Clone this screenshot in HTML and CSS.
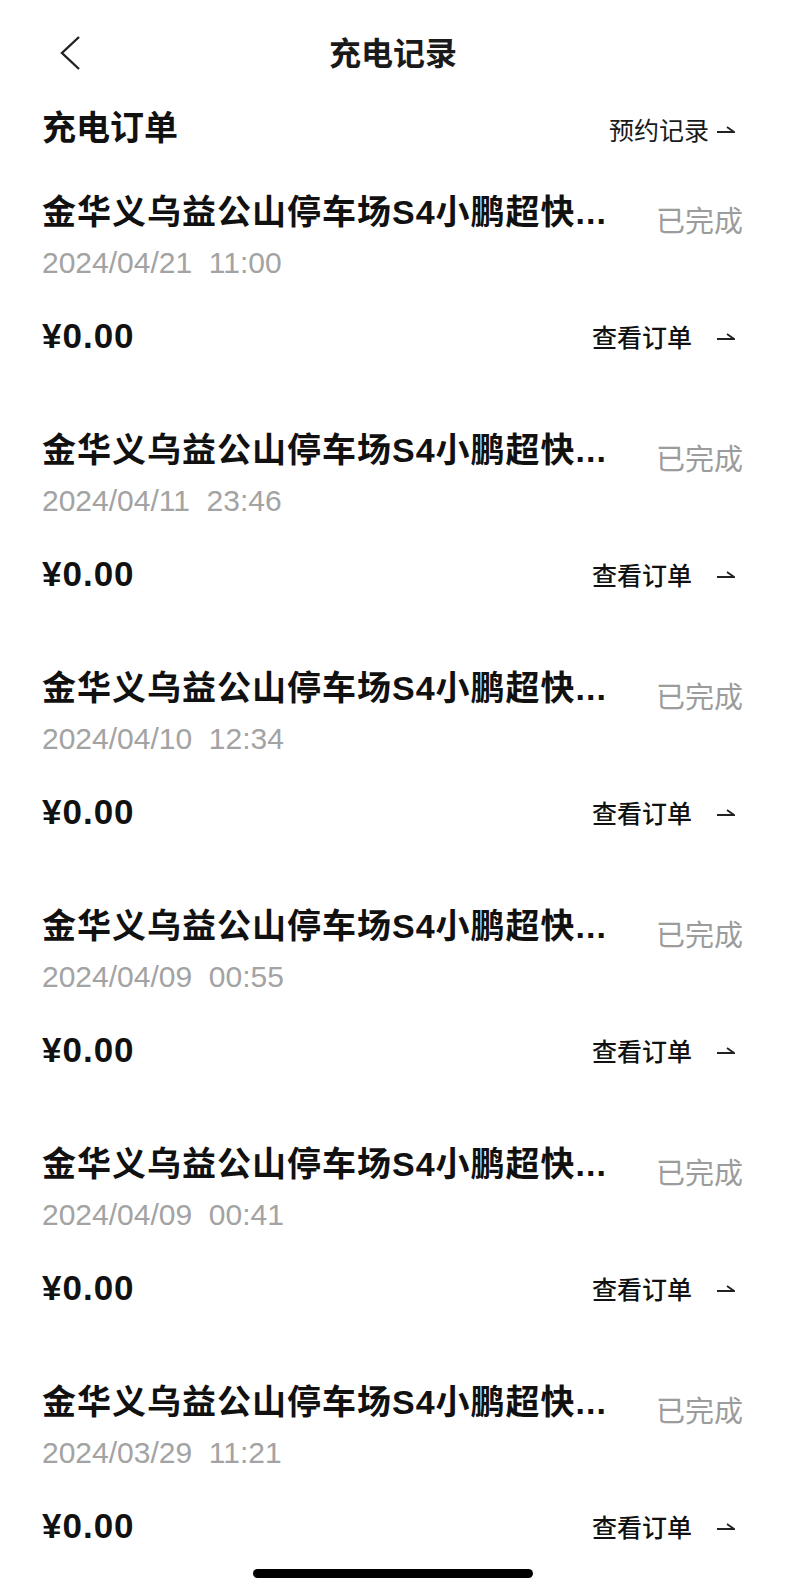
FILE: index.html
```html
<!DOCTYPE html>
<html lang="zh-CN">
<head>
    <meta charset="UTF-8">
    <meta name="viewport" content="width=device-width, initial-scale=1.0">
    <title>充电记录</title>
    <link rel="stylesheet" href="styles.css">
</head>
<body>
    <!-- Top navigation -->
    <header class="nav-bar">
        <button class="nav-back" aria-label="返回">
            <svg width="22" height="36" viewBox="0 0 22 36"><polyline points="20,2 3,18 20,34" fill="none" stroke="#222" stroke-width="2.4" stroke-linejoin="miter"/></svg>
        </button>
        <h1 class="nav-title">充电记录</h1>
        <span></span>
    </header>

    <!-- Section header -->
    <div class="section-head">
        <h2>充电订单</h2>
        <a class="link-more" href="#">预约记录
            <svg class="arrow" width="18" height="8" viewBox="0 0 18 8"><path d="M0 7H17L10 2" fill="none" stroke="#222" stroke-width="1.8"/></svg>
        </a>
    </div>

    <!-- Order list -->
    <ul class="order-list">
        <li class="order-item">
            <div class="order-top">
                <div class="order-main">
                    <div class="order-name">金华义乌益公山停车场S4小鹏超快...</div>
                    <div class="order-time">2024/04/21&nbsp;&nbsp;11:00</div>
                </div>
                <span class="order-status">已完成</span>
            </div>
            <div class="order-bottom">
                <span class="order-price">¥0.00</span>
                <a class="order-link" href="#">查看订单
                    <svg class="arrow" width="18" height="8" viewBox="0 0 18 8"><path d="M0 7H17L10 2" fill="none" stroke="#222" stroke-width="1.8"/></svg>
                </a>
            </div>
        </li>
        <li class="order-item">
            <div class="order-top">
                <div class="order-main">
                    <div class="order-name">金华义乌益公山停车场S4小鹏超快...</div>
                    <div class="order-time">2024/04/11&nbsp;&nbsp;23:46</div>
                </div>
                <span class="order-status">已完成</span>
            </div>
            <div class="order-bottom">
                <span class="order-price">¥0.00</span>
                <a class="order-link" href="#">查看订单
                    <svg class="arrow" width="18" height="8" viewBox="0 0 18 8"><path d="M0 7H17L10 2" fill="none" stroke="#222" stroke-width="1.8"/></svg>
                </a>
            </div>
        </li>
        <li class="order-item">
            <div class="order-top">
                <div class="order-main">
                    <div class="order-name">金华义乌益公山停车场S4小鹏超快...</div>
                    <div class="order-time">2024/04/10&nbsp;&nbsp;12:34</div>
                </div>
                <span class="order-status">已完成</span>
            </div>
            <div class="order-bottom">
                <span class="order-price">¥0.00</span>
                <a class="order-link" href="#">查看订单
                    <svg class="arrow" width="18" height="8" viewBox="0 0 18 8"><path d="M0 7H17L10 2" fill="none" stroke="#222" stroke-width="1.8"/></svg>
                </a>
            </div>
        </li>
        <li class="order-item">
            <div class="order-top">
                <div class="order-main">
                    <div class="order-name">金华义乌益公山停车场S4小鹏超快...</div>
                    <div class="order-time">2024/04/09&nbsp;&nbsp;00:55</div>
                </div>
                <span class="order-status">已完成</span>
            </div>
            <div class="order-bottom">
                <span class="order-price">¥0.00</span>
                <a class="order-link" href="#">查看订单
                    <svg class="arrow" width="18" height="8" viewBox="0 0 18 8"><path d="M0 7H17L10 2" fill="none" stroke="#222" stroke-width="1.8"/></svg>
                </a>
            </div>
        </li>
        <li class="order-item">
            <div class="order-top">
                <div class="order-main">
                    <div class="order-name">金华义乌益公山停车场S4小鹏超快...</div>
                    <div class="order-time">2024/04/09&nbsp;&nbsp;00:41</div>
                </div>
                <span class="order-status">已完成</span>
            </div>
            <div class="order-bottom">
                <span class="order-price">¥0.00</span>
                <a class="order-link" href="#">查看订单
                    <svg class="arrow" width="18" height="8" viewBox="0 0 18 8"><path d="M0 7H17L10 2" fill="none" stroke="#222" stroke-width="1.8"/></svg>
                </a>
            </div>
        </li>
        <li class="order-item">
            <div class="order-top">
                <div class="order-main">
                    <div class="order-name">金华义乌益公山停车场S4小鹏超快...</div>
                    <div class="order-time">2024/03/29&nbsp;&nbsp;11:21</div>
                </div>
                <span class="order-status">已完成</span>
            </div>
            <div class="order-bottom">
                <span class="order-price">¥0.00</span>
                <a class="order-link" href="#">查看订单
                    <svg class="arrow" width="18" height="8" viewBox="0 0 18 8"><path d="M0 7H17L10 2" fill="none" stroke="#222" stroke-width="1.8"/></svg>
                </a>
            </div>
        </li>
    </ul>

    <!-- iOS home indicator -->
    <div class="home-indicator"></div>
</body>
</html>
```

FILE: styles.css
```css
/* Base */
body {
    margin: 0;
    background-color: #fff;
    color: #111;
    font-family: "Liberation Sans", "Noto Sans CJK SC", sans-serif;
}
a {
    color: inherit;
    text-decoration: none;
}

/* Navigation bar */
.nav-bar {
    display: grid;
    grid-template-columns: 1fr auto 1fr;
    align-items: center;
    height: 105px;
}
.nav-back {
    justify-self: start;
    display: flex;
    padding: 0 0 0 59px;
    border: none;
    background: none;
}
.nav-title {
    margin: 0 0 4px;
    font-size: 32px;
    font-weight: 600;
    color: #1a1a1a;
}

/* Section header */
.section-head {
    display: flex;
    justify-content: space-between;
    align-items: center;
    height: 47px;
    padding: 0 51px 0 42px;
}
.section-head h2 {
    margin: 0;
    font-size: 34px;
    font-weight: 600;
    line-height: 47px;
}
.link-more {
    display: flex;
    align-items: center;
    gap: 8px;
    font-size: 25px;
    color: #1a1a1a;
}

/* Order list */
.order-list {
    list-style: none;
    margin: 0;
    padding: 0;
}
.order-item {
    height: 238px;
    box-sizing: border-box;
    padding: 38px 43px 32px 42px;
}
.order-top {
    display: flex;
    align-items: flex-start;
    justify-content: space-between;
}
.order-name {
    font-size: 34px;
    font-weight: 600;
    line-height: 45px;
    letter-spacing: 1px;
    white-space: nowrap;
}
.order-time {
    margin-top: 8px;
    font-size: 30px;
    line-height: 40px;
    color: #a3a3a3;
}
.order-status {
    margin-top: 10px;
    font-size: 29px;
    line-height: 45px;
    color: #9c9c9c;
    white-space: nowrap;
}
.order-bottom {
    display: flex;
    justify-content: space-between;
    align-items: center;
    height: 44px;
    margin-top: 31px;
    padding-right: 8px;
}
.order-price {
    font-size: 35px;
    font-weight: 700;
    letter-spacing: 1px;
}
.order-link {
    display: flex;
    align-items: center;
    gap: 25px;
    font-size: 25px;
    font-weight: 500;
}

.home-indicator {
    position: fixed;
    left: 50%;
    bottom: 17px;
    width: 280px;
    height: 9px;
    margin-left: -140px;
    border-radius: 5px;
    background-color: #000;
}
```
